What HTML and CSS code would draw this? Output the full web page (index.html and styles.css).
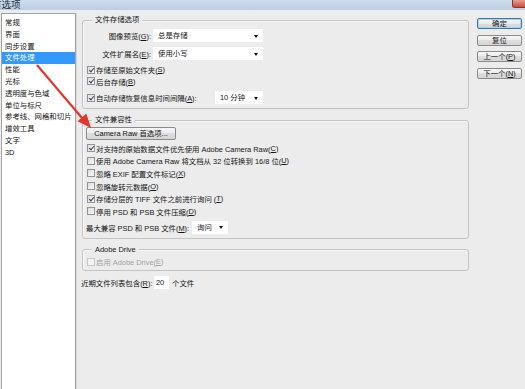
FILE: index.html
```html
<!DOCTYPE html>
<html>
<head>
<meta charset="utf-8">
<title>首选项</title>
<link rel="stylesheet" href="styles.css">
</head>
<body>

<div id="titlebar">
	<span class="title">首选项</span>
	<span class="close"></span>
</div><!-- end titlebar -->

<div id="dialog">

	<ul id="sections">
		<li>常规</li>
		<li>界面</li>
		<li>同步设置</li>
		<li class="sel">文件处理</li>
		<li>性能</li>
		<li>光标</li>
		<li>透明度与色域</li>
		<li>单位与标尺</li>
		<li>参考线、网格和切片</li>
		<li>增效工具</li>
		<li>文字</li>
		<li>3D</li>
	</ul>

	<div id="panel">

		<fieldset class="group" id="saveGroup">
			<legend>文件存储选项</legend>
			<div class="row r1">
				<span class="lbl">图像预览(<u>G</u>):</span>
				<span class="select wide">总是存储</span>
			</div>
			<div class="row r2">
				<span class="lbl">文件扩展名(<u>E</u>):</span>
				<span class="select wide">使用小写</span>
			</div>
			<div class="row r3"><span class="check on"></span>存储至原始文件夹(<u>S</u>)</div>
			<div class="row r4"><span class="check on"></span>后台存储(<u>B</u>)</div>
			<div class="row r5">
				<span class="check on"></span>
				<span class="autoLbl">自动存储恢复信息时间间隔(<u>A</u>):</span>
				<span class="select mins">10 分钟</span>
			</div>
		</fieldset>

		<fieldset class="group" id="compatGroup">
			<legend>文件兼容性</legend>
			<a class="btn crBtn">Camera Raw 首选项...</a>
			<div class="crow first"><span class="check on"></span>对支持的原始数据文件优先使用 Adobe Camera Raw(<u>C</u>)</div>
			<div class="crow"><span class="check"></span>使用 Adobe Camera Raw 将文档从 32 位转换到 16/8 位(<u>U</u>)</div>
			<div class="crow"><span class="check"></span>忽略 EXIF 配置文件标记(<u>X</u>)</div>
			<div class="crow"><span class="check"></span>忽略旋转元数据(<u>O</u>)</div>
			<div class="crow"><span class="check on"></span>存储分层的 TIFF 文件之前进行询问 (<u>T</u>)</div>
			<div class="crow"><span class="check"></span>停用 PSD 和 PSB 文件压缩(<u>D</u>)</div>
			<div class="row maxRow">
				<span class="maxLbl">最大兼容 PSD 和 PSB 文件(<u>M</u>):</span>
				<span class="select ask">询问</span>
			</div>
		</fieldset>

		<fieldset class="group" id="driveGroup">
			<legend>Adobe Drive</legend>
			<div class="row off"><span class="check"></span>启用 Adobe Drive(<u>E</u>)</div>
		</fieldset>

		<div class="row recent">
			<span class="recentLbl">近期文件列表包含(<u>R</u>):</span>
			<span class="input">20</span>
			<span class="unit">个文件</span>
		</div>

	</div><!-- end panel -->

	<div id="buttons">
		<a class="btn default">确定</a>
		<a class="btn">复位</a>
		<a class="btn">上一个(<u>P</u>)</a>
		<a class="btn">下一个(<u>N</u>)</a>
	</div><!-- end buttons -->

</div><!-- end dialog -->

<svg id="arrow" width="525" height="389">
	<line x1="37" y1="65" x2="82" y2="118" stroke="#e6352b" stroke-width="2.2" />
	<polygon points="91,128 77.5,121.2 86.3,113.6" fill="#e6352b" />
</svg>

</body>
</html>
```

FILE: styles.css
```css
* {
	margin: 0;
	padding: 0;
	box-sizing: border-box;
}

html, body {
	width: 525px;
	height: 389px;
	overflow: hidden;
}

body {
	position: relative;
	display: flex;
	flex-direction: column;
	background: #ececec;
	color: #141414;
	font: 7.4px "Liberation Sans", "Noto Sans CJK SC", sans-serif;
}

u {
	text-decoration: underline;
}

a {
	text-decoration: none;
	color: inherit;
}

#titlebar {
	height: 10px;
	display: flex;
	align-items: flex-end;
	overflow: hidden;
	background: linear-gradient(#cfdded, #bccfe4);
}

#titlebar .title {
	font-size: 9.5px;
	line-height: 12px;
	margin: 0 0 -1px -8px;
	color: #1e2a36;
}

#titlebar .close {
	align-self: flex-start;
	margin-left: auto;
	width: 13px;
	height: 8px;
	background: linear-gradient(#e3a093, #c8503c);
	border: 1px solid #8e3326;
	border-top: none;
	border-right: none;
	border-radius: 0 0 0 3px;
}

#dialog {
	flex: 1;
	display: flex;
	padding-top: 3px;
}

#sections {
	list-style: none;
	width: 75px;
	margin-left: 1px;
	padding-top: 3px;
	background: #fff;
	border: 1px solid #a3a3a3;
	border-bottom: none;
	box-shadow: 1px 0 0 #d6d6d6;
}

#sections li {
	height: 11.8px;
	line-height: 11.8px;
	padding-left: 3px;
	white-space: nowrap;
}

#sections li.sel {
	background: #3399ff;
	color: #fff;
}

#panel {
	width: 393px;
	padding: 2px 0 0 6px;
}

.group {
	border: 1px solid #c4c4c4;
	border-radius: 3px;
	padding: 0 4px 4px 4px;
	box-shadow: inset 1px 1px 0 #f8f8f8;
}

.group legend {
	margin-left: 5px;
	padding: 0 3px;
	line-height: 10px;
	background: #ececec;
}

.row {
	display: flex;
	align-items: center;
	white-space: nowrap;
}

.r1 { margin-top: 4px; height: 13px; }
.r2 { margin-top: 5px; height: 13px; }
.r3 { margin-top: 4px; height: 11px; }
.r4 { height: 12px; }
.r5 { margin-top: 4px; height: 13px; }

.lbl {
	width: 64px;
	text-align: right;
}

.select {
	position: relative;
	display: block;
	height: 13px;
	line-height: 13px;
	padding-left: 5px;
	background: #fff;
}

.select::after {
	content: "";
	position: absolute;
	right: 5px;
	top: 5.5px;
	border-left: 2.5px solid transparent;
	border-right: 2.5px solid transparent;
	border-top: 3px solid #111;
}

.select.wide {
	width: 110px;
	margin-left: 2px;
}

.autoLbl {
	width: 119px;
}

.select.mins {
	width: 48px;
}

.check {
	position: relative;
	display: inline-block;
	flex: none;
	width: 8px;
	height: 8px;
	margin-right: 1px;
	border: 1px solid #939393;
	background: linear-gradient(135deg, #dcdcdc, #fafafa);
}

.check.on::after {
	content: "";
	position: absolute;
	left: 2.1px;
	top: 0.2px;
	width: 2px;
	height: 4px;
	border: solid #2c3e63;
	border-width: 0 1.2px 1.2px 0;
	transform: rotate(40deg);
}

.btn {
	display: block;
	height: 11px;
	line-height: 9px;
	text-align: center;
	white-space: nowrap;
	border: 1px solid #8a8a8a;
	border-radius: 2px;
	background: linear-gradient(#f7f7f7, #ebebeb 50%, #dedede 50%, #d4d4d4);
}

.btn.default {
	border-color: #3c78a8;
	box-shadow: inset 0 0 0 1px #a9d5f2;
}

.crBtn {
	width: 90px;
	height: 13px;
	line-height: 11px;
	margin: 2px 0 0 -1px;
}

.crow {
	display: flex;
	align-items: center;
	height: 12.6px;
	white-space: nowrap;
}

.crow.first {
	margin-top: 2px;
}

.maxRow {
	margin: 3.4px 0 0 -1px;
	height: 13px;
}

.maxLbl {
	width: 106px;
}

.select.ask {
	width: 36px;
}

#compatGroup {
	margin-top: 6px;
}

#driveGroup {
	margin-top: 6px;
	padding-bottom: 2px;
}

.off {
	margin-top: 1px;
	height: 12px;
	color: #a2a2a2;
}

.off .check {
	border-color: #c8c8c8;
	background: #f3f3f3;
}

.recent {
	margin: 5px 0 0 -1px;
	height: 13px;
}

.recentLbl {
	width: 73px;
}

.input {
	display: block;
	width: 15px;
	height: 13px;
	line-height: 13px;
	padding-left: 2px;
	background: #fff;
}

.unit {
	margin-left: 3px;
}

#buttons {
	width: 45px;
	margin-left: 8px;
	padding-top: 5px;
	display: flex;
	flex-direction: column;
	gap: 5.5px;
}

#arrow {
	position: absolute;
	top: 0;
	left: 0;
	pointer-events: none;
}
```
